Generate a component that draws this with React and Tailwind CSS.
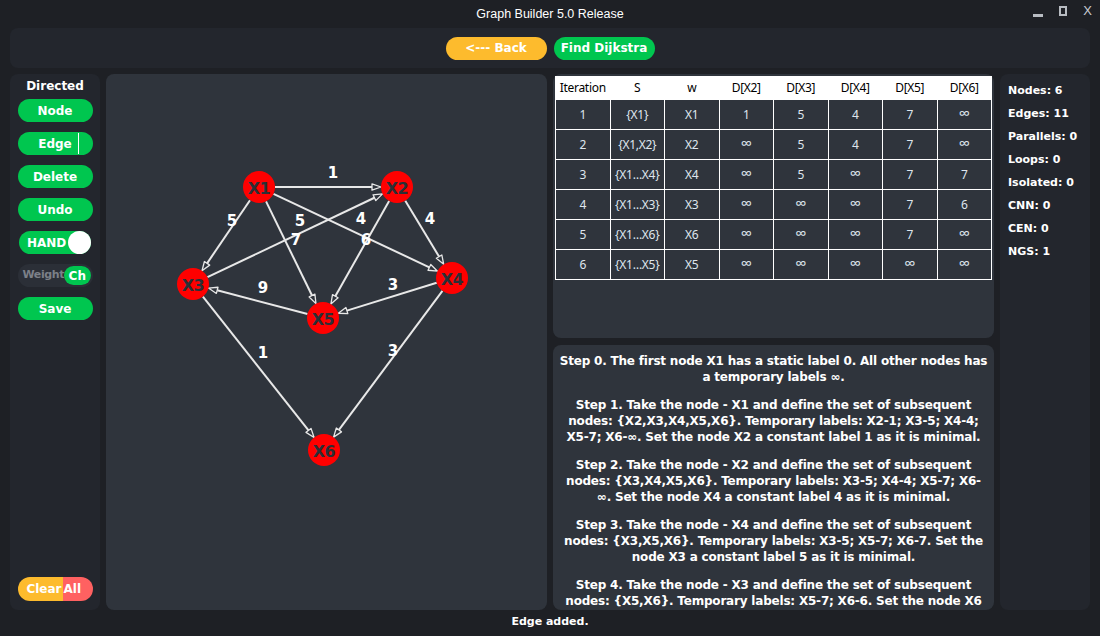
import React from 'react';

const nodes = {
  X1: [259, 187],
  X2: [397, 187],
  X3: [193, 284],
  X4: [452, 278],
  X5: [323, 318],
  X6: [324, 450],
};

// from, to, weight, label position (screen coords)
const edges = [
  ['X1', 'X2', 1, 333, 173],
  ['X1', 'X3', 5, 232, 221],
  ['X1', 'X5', 5, 300, 221],
  ['X3', 'X2', 7, 296, 240],
  ['X1', 'X4', 4, 361, 219],
  ['X2', 'X5', 6, 366, 240],
  ['X2', 'X4', 4, 430, 219],
  ['X5', 'X3', 9, 263, 288],
  ['X4', 'X5', 3, 393, 285],
  ['X3', 'X6', 1, 263, 353],
  ['X4', 'X6', 3, 393, 351],
];

const R = 16;

const Graph = () => {
  return (
    <svg width="441" height="536" viewBox="106 74 441 536" className="block">
      {edges.map(([a, b], i) => {
        const [x1, y1] = nodes[a];
        const [x2, y2] = nodes[b];
        const dx = x2 - x1;
        const dy = y2 - y1;
        const len = Math.hypot(dx, dy);
        const ux = dx / len;
        const uy = dy / len;
        const sx = x1 + ux * R;
        const sy = y1 + uy * R;
        const ex = x2 - ux * R;
        const ey = y2 - uy * R;
        const bx = ex - ux * 9;
        const by = ey - uy * 9;
        const px = -uy * 3.2;
        const py = ux * 3.2;
        return (
          <g key={i}>
            <line x1={sx} y1={sy} x2={bx} y2={by} stroke="#e8e8e8" strokeWidth="2" />
            <polygon
              points={`${ex},${ey} ${bx + px},${by + py} ${bx - px},${by - py}`}
              fill="#2f343c"
              stroke="#e8e8e8"
              strokeWidth="1.3"
              strokeLinejoin="round"
            />
          </g>
        );
      })}
      {edges.map(([, , w, lx, ly], i) => (
        <text
          key={'l' + i}
          x={lx}
          y={ly}
          textAnchor="middle"
          dominantBaseline="central"
          fill="#ffffff"
          fontFamily="'DejaVu Sans', sans-serif"
          fontWeight="bold"
          fontSize="15"
        >
          {w}
        </text>
      ))}
      {Object.entries(nodes).map(([name, [x, y]]) => (
        <g key={name}>
          <circle cx={x} cy={y} r={R} fill="#ff0000" />
          <text
            x={x}
            y={y + 1}
            textAnchor="middle"
            dominantBaseline="central"
            fill="#2b2f36"
            fontFamily="'DejaVu Sans', sans-serif"
            fontWeight="bold"
            fontSize="16"
            letterSpacing="-0.5"
          >
            {name}
          </text>
        </g>
      ))}
    </svg>
  );
};

const rows = [
  ['1', '{X1}', 'X1', '1', '5', '4', '7', '∞'],
  ['2', '{X1,X2}', 'X2', '∞', '5', '4', '7', '∞'],
  ['3', '{X1…X4}', 'X4', '∞', '5', '∞', '7', '7'],
  ['4', '{X1…X3}', 'X3', '∞', '∞', '∞', '7', '6'],
  ['5', '{X1…X6}', 'X6', '∞', '∞', '∞', '7', '∞'],
  ['6', '{X1…X5}', 'X5', '∞', '∞', '∞', '∞', '∞'],
];

const headers = ['Iteration', 'S', 'w', 'D[X2]', 'D[X3]', 'D[X4]', 'D[X5]', 'D[X6]'];

const steps = [
  ['Step 0. The first node X1 has a static label 0. All other nodes has', 'a temporary labels ∞.'],
  [
    'Step 1. Take the node - X1 and define the set of subsequent',
    'nodes: {X2,X3,X4,X5,X6}. Temporary labels: X2-1; X3-5; X4-4;',
    'X5-7; X6-∞. Set the node X2 a constant label 1 as it is minimal.',
  ],
  [
    'Step 2. Take the node - X2 and define the set of subsequent',
    'nodes: {X3,X4,X5,X6}. Temporary labels: X3-5; X4-4; X5-7; X6-',
    '∞. Set the node X4 a constant label 4 as it is minimal.',
  ],
  [
    'Step 3. Take the node - X4 and define the set of subsequent',
    'nodes: {X3,X5,X6}. Temporary labels: X3-5; X5-7; X6-7. Set the',
    'node X3 a constant label 5 as it is minimal.',
  ],
  [
    'Step 4. Take the node - X3 and define the set of subsequent',
    'nodes: {X5,X6}. Temporary labels: X5-7; X6-6. Set the node X6',
    'a constant label 6 as it is minimal.',
  ],
];

const stats = ['Nodes: 6', 'Edges: 11', 'Parallels: 0', 'Loops: 0', 'Isolated: 0', 'CNN: 0', 'CEN: 0', 'NGS: 1'];

const GreenBtn = ({ children }) => (
  <div className="h-[23px] w-[75px] rounded-full bg-[#00c64f] flex items-center justify-center text-white text-[12px] font-bold">
    {children}
  </div>
);

const App = () => {
  return (
    <div
      className="w-[1100px] h-[636px] bg-[#1e2025] text-white flex flex-col overflow-hidden"
      style={{ fontFamily: "'DejaVu Sans', Verdana, sans-serif" }}
    >
      {/* title bar */}
      <div className="h-[28px] flex items-center relative">
        <div className="flex-1 text-center text-[12.5px] text-white font-['Liberation_Sans',sans-serif] pt-[1px]">
          Graph Builder 5.0 Release
        </div>
        <div className="absolute right-[8px] top-[4px] flex items-center gap-[16px] text-[#c9ccd1]">
          <div className="w-[10px] h-[3px] bg-[#b8bcc2] mt-[9px]" />
          <div className="w-[8px] h-[10px] border-2 border-[#b8bcc2]" />
          <div className="text-[13px] font-['Liberation_Sans',sans-serif] leading-none">X</div>
        </div>
      </div>

      {/* toolbar */}
      <div className="mx-[10px] h-[40px] rounded-[8px] bg-[#23262d] flex items-center justify-center gap-[7px]">
        <div className="w-[101px] h-[23px] rounded-full bg-[#fdbb2d] flex items-center justify-center text-[12px] font-bold">
          &lt;--- Back
        </div>
        <div className="w-[101px] h-[23px] rounded-full bg-[#00c64f] flex items-center justify-center text-[12px] font-bold">
          Find Dijkstra
        </div>
      </div>

      {/* main */}
      <div className="flex gap-[6px] px-[10px] pt-[6px] h-[542px]">
        {/* sidebar */}
        <div className="w-[90px] rounded-[8px] bg-[#23262d] flex flex-col items-center pt-[5px] pb-[9px]">
          <div className="text-[12px] font-bold leading-[14px] mb-[6px]">Directed</div>
          <div className="flex flex-col gap-[10px] items-center">
            <GreenBtn>Node</GreenBtn>
            <div className="h-[23px] w-[75px] rounded-full bg-[#00c64f] flex items-center justify-center text-white text-[12px] font-bold relative">
              Edge
              <div className="absolute right-[14px] top-[1px] w-[1px] h-[21px] bg-white" />
            </div>
            <GreenBtn>Delete</GreenBtn>
            <GreenBtn>Undo</GreenBtn>
            <div className="h-[23px] w-[72px] rounded-full bg-[#00c64f] flex items-center justify-between pl-[8px] text-[12px] font-bold">
              HAND
              <div className="w-[23px] h-[23px] rounded-full bg-white" />
            </div>
            <div className="h-[23px] w-[75px] rounded-full bg-[#2b2f37] flex items-center justify-between pl-[5px] pr-[2px] font-bold">
              <span className="text-[#7c8088] text-[11px] tracking-[-0.4px]">Weight</span>
              <span className="h-[19px] w-[27px] rounded-full bg-[#00c64f] flex items-center justify-center text-white text-[12px]">Ch</span>
            </div>
            <GreenBtn>Save</GreenBtn>
          </div>
          <div className="flex-1" />
          <div className="h-[24px] w-[75px] rounded-full overflow-hidden flex text-[12px] font-bold">
            <div className="w-[45px] bg-[#fdbb2d] flex items-center justify-end pr-[1px]">Clear</div>
            <div className="flex-1 bg-[#ff6161] flex items-center pl-[1px]">All</div>
          </div>
        </div>

        {/* canvas */}
        <div className="w-[441px] rounded-[8px] bg-[#2f343c] overflow-hidden">
          <Graph />
        </div>

        {/* center column */}
        <div className="w-[441px] flex flex-col gap-[7px]">
          <div className="h-[264px] rounded-[8px] bg-[#2f343c] p-[2px]">
            <table
              className="w-[437px] border-collapse table-fixed text-[12px]"
              style={{ fontFamily: "'Noto Sans', 'Open Sans', sans-serif" }}
            >
              <thead>
                <tr className="bg-white text-black h-[23px]">
                  {headers.map((h) => (
                    <th key={h} className="border border-white font-normal p-0 text-[12px] tracking-[-0.3px]">
                      {h}
                    </th>
                  ))}
                </tr>
              </thead>
              <tbody>
                {rows.map((r, i) => (
                  <tr key={i} className="h-[30px]">
                    {r.map((c, j) => (
                      <td key={j} className="border border-white text-center text-[#dfe6ee] p-0 tracking-[-0.3px]">
                        {c === '∞' ? <span className="text-[16px] leading-none">∞</span> : c}
                      </td>
                    ))}
                  </tr>
                ))}
              </tbody>
            </table>
          </div>
          <div className="flex-1 rounded-[8px] bg-[#2f343c] overflow-hidden px-[4px] pt-[8px]">
            <div className="flex flex-col gap-[12px] text-[12px] font-bold leading-[16px] text-center tracking-[-0.2px]">
              {steps.map((s, i) => (
                <p key={i}>
                  {s.map((line, k) => (
                    <span key={k} className="block whitespace-nowrap">
                      {line}
                    </span>
                  ))}
                </p>
              ))}
            </div>
          </div>
        </div>

        {/* stats */}
        <div className="w-[90px] rounded-[8px] bg-[#23262d] pl-[8px] pt-[10px] flex flex-col gap-[9px] text-[11px] font-bold leading-[14px]">
          {stats.map((s) => (
            <div key={s}>{s}</div>
          ))}
        </div>
      </div>

      {/* status */}
      <div className="flex-1 flex items-center justify-center text-[11px] font-bold pb-[2px]">Edge added.</div>
    </div>
  );
};

export default App;
